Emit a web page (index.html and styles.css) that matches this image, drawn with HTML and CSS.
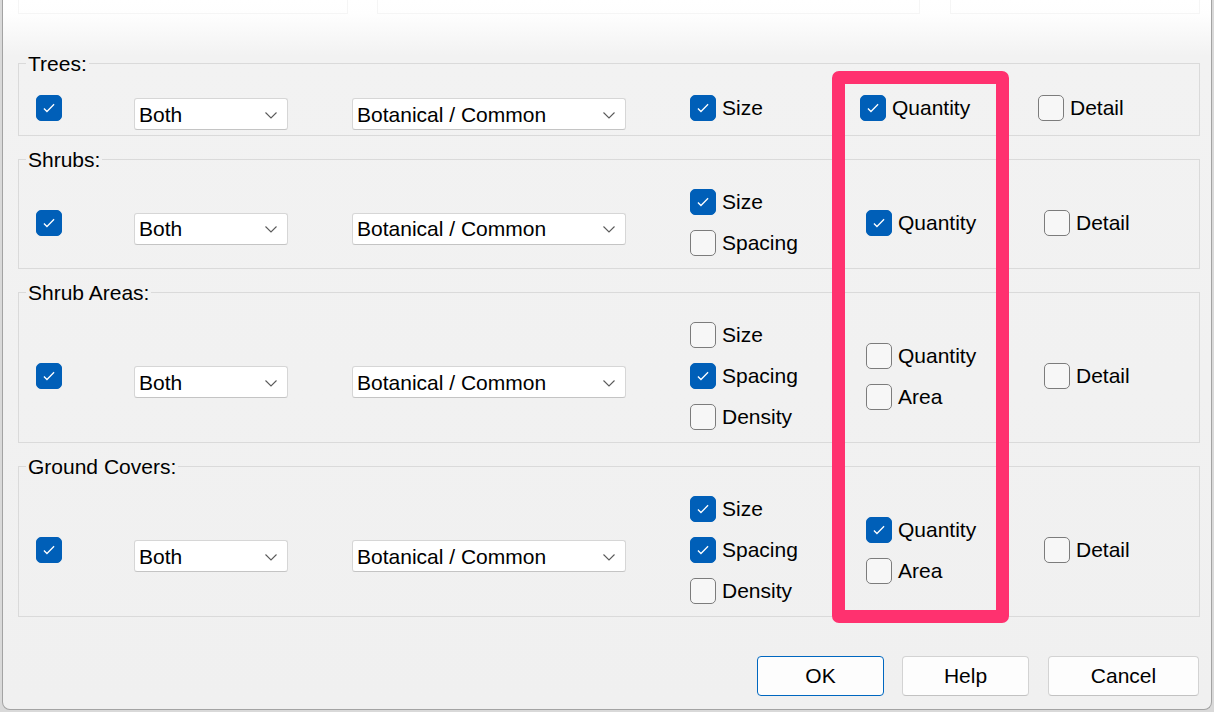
FILE: index.html
```html
<!DOCTYPE html>
<html lang="en">
<head>
    <meta charset="UTF-8">
    <title>Plant Schedule Options</title>
    <link rel="stylesheet" href="styles.css">
</head>
<body>
    <div class="dialog">
        <div class="ghost">
            <span class="ghost-box one"></span>
            <span class="ghost-box two"></span>
            <span class="ghost-box three"></span>
        </div>

        <fieldset class="group trees">
            <legend>Trees:</legend>
            <div class="row">
                <div class="main"><span class="cb on"><svg viewBox="0 0 26 26"><path d="M7.5 13.5 L10.8 16.8 L18.5 9"/></svg></span></div>
                <div class="combo kind"><span>Both</span><svg class="chev" viewBox="0 0 12 7"><path d="M0.5 0.5 L6 6 L11.5 0.5"/></svg></div>
                <div class="combo name"><span>Botanical / Common</span><svg class="chev" viewBox="0 0 12 7"><path d="M0.5 0.5 L6 6 L11.5 0.5"/></svg></div>
                <div class="opts narrow">
                    <label class="opt"><span class="cb on"><svg viewBox="0 0 26 26"><path d="M7.5 13.5 L10.8 16.8 L18.5 9"/></svg></span>Size</label>
                </div>
                <div class="opts qty">
                    <label class="opt"><span class="cb on"><svg viewBox="0 0 26 26"><path d="M7.5 13.5 L10.8 16.8 L18.5 9"/></svg></span>Quantity</label>
                </div>
                <div class="opts last">
                    <label class="opt"><span class="cb"></span>Detail</label>
                </div>
            </div>
        </fieldset>

        <fieldset class="group">
            <legend>Shrubs:</legend>
            <div class="row">
                <div class="main"><span class="cb on"><svg viewBox="0 0 26 26"><path d="M7.5 13.5 L10.8 16.8 L18.5 9"/></svg></span></div>
                <div class="combo kind"><span>Both</span><svg class="chev" viewBox="0 0 12 7"><path d="M0.5 0.5 L6 6 L11.5 0.5"/></svg></div>
                <div class="combo name"><span>Botanical / Common</span><svg class="chev" viewBox="0 0 12 7"><path d="M0.5 0.5 L6 6 L11.5 0.5"/></svg></div>
                <div class="opts">
                    <label class="opt"><span class="cb on"><svg viewBox="0 0 26 26"><path d="M7.5 13.5 L10.8 16.8 L18.5 9"/></svg></span>Size</label>
                    <label class="opt"><span class="cb"></span>Spacing</label>
                </div>
                <div class="opts qty">
                    <label class="opt"><span class="cb on"><svg viewBox="0 0 26 26"><path d="M7.5 13.5 L10.8 16.8 L18.5 9"/></svg></span>Quantity</label>
                </div>
                <div class="opts last">
                    <label class="opt"><span class="cb"></span>Detail</label>
                </div>
            </div>
        </fieldset>

        <fieldset class="group">
            <legend>Shrub Areas:</legend>
            <div class="row">
                <div class="main"><span class="cb on"><svg viewBox="0 0 26 26"><path d="M7.5 13.5 L10.8 16.8 L18.5 9"/></svg></span></div>
                <div class="combo kind"><span>Both</span><svg class="chev" viewBox="0 0 12 7"><path d="M0.5 0.5 L6 6 L11.5 0.5"/></svg></div>
                <div class="combo name"><span>Botanical / Common</span><svg class="chev" viewBox="0 0 12 7"><path d="M0.5 0.5 L6 6 L11.5 0.5"/></svg></div>
                <div class="opts">
                    <label class="opt"><span class="cb"></span>Size</label>
                    <label class="opt"><span class="cb on"><svg viewBox="0 0 26 26"><path d="M7.5 13.5 L10.8 16.8 L18.5 9"/></svg></span>Spacing</label>
                    <label class="opt"><span class="cb"></span>Density</label>
                </div>
                <div class="opts qty">
                    <label class="opt"><span class="cb"></span>Quantity</label>
                    <label class="opt"><span class="cb"></span>Area</label>
                </div>
                <div class="opts last">
                    <label class="opt"><span class="cb"></span>Detail</label>
                </div>
            </div>
        </fieldset>

        <fieldset class="group">
            <legend>Ground Covers:</legend>
            <div class="row">
                <div class="main"><span class="cb on"><svg viewBox="0 0 26 26"><path d="M7.5 13.5 L10.8 16.8 L18.5 9"/></svg></span></div>
                <div class="combo kind"><span>Both</span><svg class="chev" viewBox="0 0 12 7"><path d="M0.5 0.5 L6 6 L11.5 0.5"/></svg></div>
                <div class="combo name"><span>Botanical / Common</span><svg class="chev" viewBox="0 0 12 7"><path d="M0.5 0.5 L6 6 L11.5 0.5"/></svg></div>
                <div class="opts">
                    <label class="opt"><span class="cb on"><svg viewBox="0 0 26 26"><path d="M7.5 13.5 L10.8 16.8 L18.5 9"/></svg></span>Size</label>
                    <label class="opt"><span class="cb on"><svg viewBox="0 0 26 26"><path d="M7.5 13.5 L10.8 16.8 L18.5 9"/></svg></span>Spacing</label>
                    <label class="opt"><span class="cb"></span>Density</label>
                </div>
                <div class="opts qty">
                    <label class="opt"><span class="cb on"><svg viewBox="0 0 26 26"><path d="M7.5 13.5 L10.8 16.8 L18.5 9"/></svg></span>Quantity</label>
                    <label class="opt"><span class="cb"></span>Area</label>
                </div>
                <div class="opts last">
                    <label class="opt"><span class="cb"></span>Detail</label>
                </div>
            </div>
        </fieldset>

        <div class="buttons">
            <button class="btn ok">OK</button>
            <button class="btn">Help</button>
            <button class="btn cancel">Cancel</button>
        </div>

        <!-- highlight drawn over the quantity column -->
        <div class="highlight"></div>
    </div>
</body>
</html>
```

FILE: styles.css
```css
* {
    box-sizing: border-box;
}

body {
    margin: 0;
    background: #d9d9d9;
    font-family: 'Liberation Sans', Arial, sans-serif;
    font-size: 21px;
    color: #000;
}

.dialog {
    position: relative;
    width: 1210px;
    height: 710px;
    margin-left: 2px;
    padding: 0 11px 0 15px;
    border: 1px solid #a3a3a3;
    border-top: none;
    border-radius: 0 0 8px 8px;
    background: linear-gradient(to bottom, #ffffff 0, #fefefe 14px, #f2f2f2 56px, #f0f0f0 100%);
}

/* faded strip of the window underneath */
.ghost {
    display: flex;
    height: 14px;
    margin-bottom: 38px;
}

.ghost-box {
    height: 14px;
    border: 1px solid #f5f5f5;
    border-top: none;
}

.ghost-box.one { width: 330px; }
.ghost-box.two { width: 543px; margin-left: 29px; }
.ghost-box.three { width: 250px; margin-left: 30px; }

.group {
    margin: 0 0 12px 0;
    padding: 0;
    border: 1px solid #dadada;
    min-width: 0;
}

.group legend {
    margin-left: 7px;
    padding: 0 2px;
    line-height: 23px;
}

.row {
    display: flex;
    align-items: center;
    padding: 18px 0 12px 17px;
}

.row > * {
    flex: none;
}

.trees .row {
    padding: 17px 0 11px 17px;
}

.main {
    width: 98px;
    display: flex;
}

.combo {
    display: flex;
    align-items: center;
    justify-content: space-between;
    height: 32px;
    margin-top: 6px;
    margin-bottom: -6px;
    padding: 1px 10px 0 4px;
    background: #fff;
    border: 1px solid #d6d6d6;
    border-bottom-color: #c4c4c4;
    border-radius: 3px;
}

.combo.kind {
    width: 154px;
    margin-right: 64px;
}

.combo.name {
    width: 274px;
    margin-right: 64px;
}

.chev {
    width: 12px;
    height: 7px;
    margin-top: 1px;
}

.chev path {
    fill: none;
    stroke: #5a5a5a;
    stroke-width: 1.1;
}

.opts {
    display: flex;
    flex-direction: column;
    gap: 15px;
    width: 176px;
}

.opts.narrow {
    width: 170px;
}

.opts.qty {
    width: 178px;
}

.opts.last {
    width: auto;
}

.opt {
    display: flex;
    align-items: center;
    gap: 6px;
    height: 26px;
    line-height: 26px;
    white-space: nowrap;
}

.cb {
    display: inline-block;
    flex: none;
    width: 26px;
    height: 26px;
    border: 1px solid #7c7c7c;
    border-radius: 5px;
    background: #f7f7f7;
}

.cb.on {
    border-color: #005fb8;
    background: #005fb8;
}

.cb svg {
    display: block;
    width: 24px;
    height: 24px;
}

.cb path {
    fill: none;
    stroke: #fff;
    stroke-width: 1.4;
}

.buttons {
    display: flex;
    justify-content: flex-end;
    margin-top: 39px;
    padding-right: 1px;
}

.btn {
    height: 40px;
    width: 127px;
    margin-left: 18px;
    font-family: 'Liberation Sans', Arial, sans-serif;
    font-size: 21px;
    color: #000;
    background: #fdfdfd;
    border: 1px solid #d3d3d3;
    border-bottom-color: #c2c2c2;
    border-radius: 4px;
}

.btn.ok {
    border-color: #0067c0;
}

.btn.cancel {
    width: 151px;
    margin-left: 19px;
}

.highlight {
    position: absolute;
    left: 829px;
    top: 71px;
    width: 177px;
    height: 552px;
    border: 13px solid #ff316f;
    border-radius: 7px;
}
```
